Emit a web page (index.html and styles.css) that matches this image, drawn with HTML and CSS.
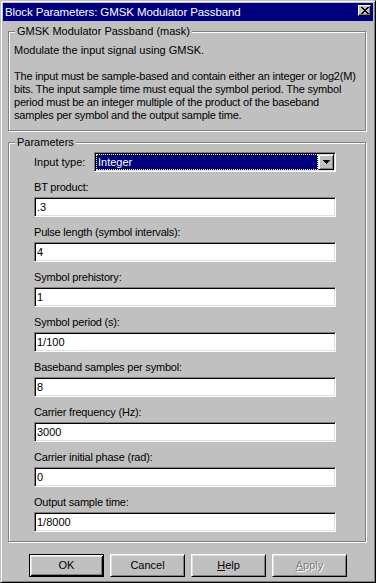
FILE: index.html
```html
<!DOCTYPE html>
<html lang="en">
<head>
<meta charset="UTF-8" />
<meta name="viewport" content="width=device-width, initial-scale=1" />
<title>Block Parameters: GMSK Modulator Passband</title>
<link rel="stylesheet" href="styles.css">
</head>
<body>
<div class="window">
  <div class="titlebar">
    <span class="title">Block Parameters: GMSK Modulator Passband</span>
    <span class="close-btn">
      <svg width="8" height="7" viewBox="0 0 8 7" shape-rendering="crispEdges">
        <path d="M0 0h2v1h-2zM6 0h2v1h-2zM1 1h2v1h-2zM5 1h2v1h-2zM2 2h4v1h-4zM3 3h2v1h-2zM2 4h4v1h-4zM1 5h2v1h-2zM5 5h2v1h-2zM0 6h2v1h-2zM6 6h2v1h-2z" fill="#000"/>
      </svg>
    </span>
  </div>

  <div class="dialog">
    <fieldset class="group">
      <legend>GMSK Modulator Passband (mask)</legend>
      <div class="group-desc">
        <p>Modulate the input signal using GMSK.</p>
        <p class="desc-long">The input must be sample-based and contain either an integer or log2(M)<br>
        bits. The input sample time must equal the symbol period. The symbol<br>
        period must be an integer multiple of the product of the baseband<br>
        samples per symbol and the output sample time.</p>
      </div>
    </fieldset>

    <fieldset class="group group-params">
      <legend>Parameters</legend>
      <div class="param-list">
        <div class="combo-row">
          <label class="combo-label">Input type:</label>
          <div class="combo">
            <span class="combo-value">Integer</span>
            <span class="combo-btn">
              <svg width="7" height="4" viewBox="0 0 7 4" shape-rendering="crispEdges">
                <path d="M0 0h7v1h-7zM1 1h5v1h-5zM2 2h3v1h-3zM3 3h1v1h-1z" fill="#000"/>
              </svg>
            </span>
          </div>
        </div>
        <div class="field"><label>BT product:</label><div class="edit">.3</div></div>
        <div class="field"><label>Pulse length (symbol intervals):</label><div class="edit">4</div></div>
        <div class="field"><label>Symbol prehistory:</label><div class="edit">1</div></div>
        <div class="field"><label>Symbol period (s):</label><div class="edit">1/100</div></div>
        <div class="field"><label>Baseband samples per symbol:</label><div class="edit">8</div></div>
        <div class="field"><label>Carrier frequency (Hz):</label><div class="edit">3000</div></div>
        <div class="field"><label>Carrier initial phase (rad):</label><div class="edit">0</div></div>
        <div class="field"><label>Output sample time:</label><div class="edit">1/8000</div></div>
      </div>
    </fieldset>

    <div class="buttons">
      <div class="btn btn-default">OK</div>
      <div class="btn">Cancel</div>
      <div class="btn"><u>H</u>elp</div>
      <div class="btn btn-disabled"><u>A</u>pply</div>
    </div>
  </div>
</div>
</body>
</html>
```

FILE: styles.css
```css
body {
  margin: 0;
  background-color: #c0c0c0;
  font-family: "Liberation Sans", Arial, sans-serif;
  font-size: 11px;
  color: #000;
}
.window {
  width: 376px;
  height: 583px;
  box-sizing: border-box;
  padding: 2px;
  border: 1px solid;
  border-color: #c0c0c0 #000 #000 #c0c0c0;
  box-shadow: inset 1px 1px #fff, inset -1px -1px #808080;
}
.titlebar {
  height: 18px;
  background-color: #000080;
  color: #fff;
  display: flex;
  justify-content: space-between;
  align-items: flex-start;
  padding: 0 2px;
}
.title {
  font-size: 11.5px;
  letter-spacing: -0.1px;
  line-height: 18px;
  white-space: nowrap;
}
.close-btn {
  width: 13px;
  height: 11px;
  margin-top: 2px;
  box-sizing: border-box;
  background-color: #c0c0c0;
  border: 1px solid;
  border-color: #fff #000 #000 #fff;
  box-shadow: inset -1px -1px #808080;
  display: flex;
  align-items: center;
  justify-content: center;
}
.close-btn svg {
  display: block;
}
.dialog {
  padding: 4px 0 0 5px;
}
.group {
  margin: 0;
  padding: 0;
  width: 358px;
  box-sizing: border-box;
  border: 1px solid #808080;
  box-shadow: 1px 1px #fff, inset 1px 1px #fff;
}
.group legend {
  margin-left: 6px;
  padding: 0 2px;
  line-height: 13px;
  background-color: #c0c0c0;
}
.group-desc {
  padding: 6px 0 8px 5px;
  white-space: nowrap;
}
.group-desc p {
  margin: 0;
  line-height: 13px;
}
.group-desc p + p {
  margin-top: 13px;
}
.desc-long {
  letter-spacing: -0.2px;
}
.group-params {
  margin-top: 5px;
}
.param-list {
  display: flex;
  flex-direction: column;
  gap: 9px;
  padding: 3px 29px 9px 25px;
}
.combo-row {
  display: flex;
  align-items: center;
}
.combo-label {
  width: 60px;
}
.combo {
  width: 242px;
  height: 20px;
  box-sizing: border-box;
  padding: 1px;
  display: flex;
  border: 1px solid;
  border-color: #808080 #fff #fff #808080;
  box-shadow: inset 1px 1px #000, inset -1px -1px #dfdfdf;
  background-color: #fff;
}
.combo-value {
  flex: 1;
  background-color: #000080;
  color: #fff;
  border: 1px dotted #ffff80;
  line-height: 14px;
  padding-left: 1px;
}
.combo-btn {
  width: 16px;
  height: 16px;
  box-sizing: border-box;
  background-color: #c0c0c0;
  border: 1px solid;
  border-color: #dfdfdf #000 #000 #dfdfdf;
  box-shadow: inset 1px 1px #fff, inset -1px -1px #808080;
  display: flex;
  align-items: center;
  justify-content: center;
}
.combo-btn svg {
  display: block;
}
.field label {
  display: block;
  line-height: 13px;
  margin-bottom: 3px;
  letter-spacing: -0.2px;
}
.edit {
  height: 20px;
  box-sizing: border-box;
  padding: 0 2px;
  line-height: 18px;
  background-color: #fff;
  border: 1px solid;
  border-color: #808080 #fff #fff #808080;
  box-shadow: inset 1px 1px #000, inset -1px -1px #dfdfdf;
}
.buttons {
  display: flex;
  gap: 6px;
  margin: 12px 0 0 21px;
}
.btn {
  width: 75px;
  height: 23px;
  box-sizing: border-box;
  text-align: center;
  line-height: 21px;
  border: 1px solid;
  border-color: #fff #000 #000 #fff;
  box-shadow: inset 1px 1px #dfdfdf, inset -1px -1px #808080;
}
.btn-default {
  border-color: #000;
  box-shadow: inset 1px 1px #fff, inset -1px -1px #000, inset 2px 2px #dfdfdf, inset -2px -2px #808080;
}
.btn-disabled {
  color: #808080;
  text-shadow: 1px 1px #fff;
}
```
